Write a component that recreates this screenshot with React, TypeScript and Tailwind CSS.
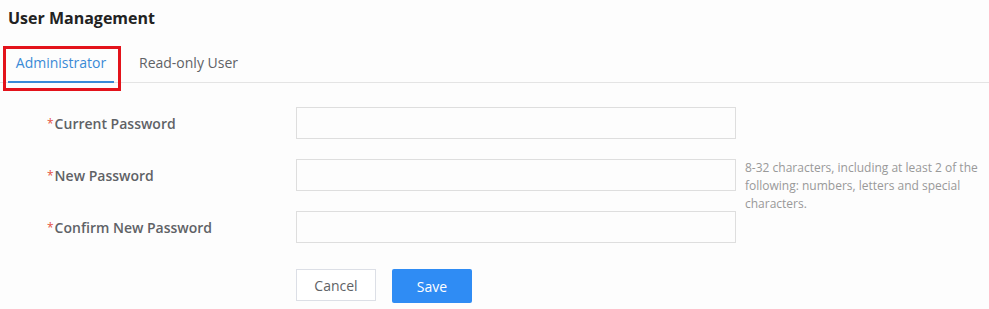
export default function App() {
  const rows = [
    { label: "Current Password" },
    { label: "New Password", hint: true },
    { label: "Confirm New Password" },
  ];

  return (
    <div
      className="w-[989px] h-[309px] bg-[#fdfdfd] overflow-hidden"
      style={{ fontFamily: '"Open Sans", "Liberation Sans", sans-serif' }}
    >
      <h1 className="pl-2 pt-[7px] text-[16px] font-bold text-[#222] leading-[22px]">
        User Management
      </h1>

      {/* tabs */}
      <div className="mt-[10px] flex items-end border-b border-[#e4e4e4] h-[44px]">
        <div className="relative ml-2 w-[106px] h-full flex items-center justify-center">
          <span className="text-[14px] text-[#3a8ad6] pt-[3px]">Administrator</span>
          <div className="absolute left-0 right-0 bottom-[-1px] h-[2px] bg-[#3a8ad6]" />
          <div className="absolute left-[-5px] right-[-7px] top-[7px] bottom-[-9px] border-[3px] border-[#e3131b]" />
        </div>
        <div className="ml-[25px] h-full flex items-center">
          <span className="text-[14px] text-[#606266] pt-[3px]">Read-only User</span>
        </div>
      </div>

      {/* form */}
      <div className="pl-[47px] pt-[24px]">
        {rows.map((r) => (
          <div key={r.label} className="flex items-start h-[32px] mb-[20px]">
            <div className="w-[249px] h-[32px] flex items-center text-[14px] font-semibold text-[#5f6266]">
              <span className="text-[#e5533d] text-[12px] font-normal mr-[1px] mt-[2px]">*</span>
              {r.label}
            </div>
            <input
              type="password"
              className="w-[440px] h-[32px] border border-[#dedede] bg-[#fdfdfd] outline-none"
            />
            {r.hint && (
              <p className="ml-[9px] w-[244px] text-[12px] leading-[18px] text-[#999]">
                8-32 characters, including at least 2 of the following: numbers, letters and special
                characters.
              </p>
            )}
          </div>
        ))}
        <div className="flex pl-[249px] pt-[6px] gap-4">
          <button className="w-[80px] h-[32px] border border-[#dcdfe6] bg-white text-[14px] text-[#606266]">
            Cancel
          </button>
          <button className="w-[80px] h-[34px] rounded-[2px] bg-[#2f8cf4] text-[14px] text-white">
            Save
          </button>
        </div>
      </div>
    </div>
  );
}
